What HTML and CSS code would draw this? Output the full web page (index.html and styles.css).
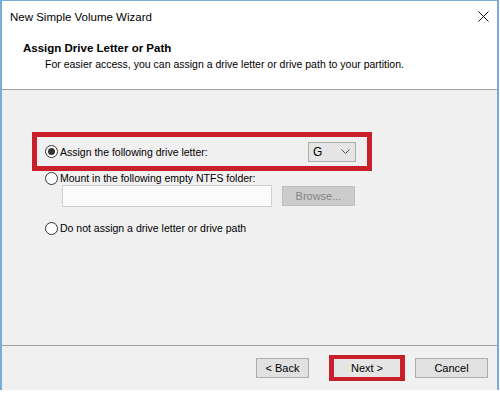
FILE: index.html
```html
<!DOCTYPE html>
<html lang="en">
<head>
  <meta charset="UTF-8" />
  <title>New Simple Volume Wizard</title>
  <link rel="stylesheet" href="styles.css">
</head>
<body>

  <div class="window">
    <div class="titlebar">
      <span class="title">New Simple Volume Wizard</span>
      <svg class="close" width="11" height="11" viewBox="0 0 11 11">
        <path d="M0.5 0.5 L10.5 10.5 M10.5 0.5 L0.5 10.5" stroke="#111" stroke-width="1" fill="none"/>
      </svg>
    </div>

    <div class="header">
      <div class="heading">Assign Drive Letter or Path</div>
      <div class="subtitle">For easier access, you can assign a drive letter or drive path to your partition.</div>
    </div>

    <div class="content">
      <div class="choice picked highlight">
        <label class="option">
          <span class="radio checked"></span>
          <span>Assign the following drive letter:</span>
        </label>
        <div class="dropdown">
          <span>G</span>
          <svg width="9" height="6" viewBox="0 0 9 6">
            <path d="M0.5 0.5 L4.5 4.5 L8.5 0.5" stroke="#555" stroke-width="1" fill="none"/>
          </svg>
        </div>
      </div>

      <label class="choice option">
        <span class="radio"></span>
        <span>Mount in the following empty NTFS folder:</span>
      </label>
      <div class="folder-row">
        <div class="textbox"></div>
        <button class="btn disabled">Browse...</button>
      </div>

      <label class="choice option last">
        <span class="radio"></span>
        <span>Do not assign a drive letter or drive path</span>
      </label>
    </div>

    <div class="footer">
      <button class="btn">&lt; Back</button>
      <div class="highlight next-wrap">
        <button class="btn next">Next &gt;</button>
      </div>
      <button class="btn">Cancel</button>
    </div>
  </div>

</body>
</html>
```

FILE: styles.css
```css
body {
  margin: 0;
  padding: 0;
  background: #fff;
  font-family: "Liberation Sans", Arial, sans-serif;
  font-size: 10.5px;
  color: #000;
}

.window {
  width: 499px;
  height: 390px;
  box-sizing: border-box;
  border: 1px solid #79acd9;
  border-left-width: 2px;
  border-right-width: 2px;
  border-bottom: none;
  display: flex;
  flex-direction: column;
}

.titlebar {
  height: 29px;
  display: flex;
  align-items: center;
  justify-content: space-between;
  padding: 0 8px 0 8px;
  background: #fff;
}

.title {
  font-size: 11.5px;
  margin-top: 2px;
}

.close {
  margin-top: 2px;
}

.header {
  height: 60px;
  box-sizing: border-box;
  padding: 11px 0 0 21px;
  background: #fff;
  border-bottom: 1px solid #a0a0a0;
}

.heading {
  font-weight: bold;
  font-size: 11.5px;
  line-height: 14px;
}

.subtitle {
  padding-left: 22px;
  line-height: 14px;
  margin-top: 2px;
}

.content {
  flex: 1;
  background: #f0f0f0;
  border-bottom: 1px solid #a0a0a0;
  padding: 42px 0 0 30px;
  display: flex;
  flex-direction: column;
  align-items: flex-start;
}

.highlight {
  border: 5px solid #c8202b;
}

.choice.picked {
  width: 340px;
  height: 39px;
  box-sizing: border-box;
  padding: 0 11px 0 8px;
  display: flex;
  align-items: center;
  justify-content: space-between;
}

.option {
  display: flex;
  align-items: center;
  gap: 2px;
  line-height: 14px;
}

label.choice {
  margin-left: 13px;
  height: 14px;
}

.choice.last {
  margin-top: 14px;
}

.radio {
  width: 13px;
  height: 13px;
  box-sizing: border-box;
  border: 1px solid #333;
  border-radius: 50%;
  background: #fff;
  display: flex;
  align-items: center;
  justify-content: center;
}

.radio.checked::after {
  content: "";
  width: 7px;
  height: 7px;
  border-radius: 50%;
  background: #333;
}

.dropdown {
  width: 48px;
  height: 20px;
  box-sizing: border-box;
  background: #e5e5e5;
  border: 1px solid #acacac;
  display: flex;
  align-items: center;
  justify-content: space-between;
  padding: 0 5px 0 4px;
  font-size: 12px;
}

.folder-row {
  display: flex;
  align-items: center;
  gap: 10px;
  margin-left: 30px;
}

.textbox {
  width: 210px;
  height: 22px;
  box-sizing: border-box;
  background: #fbfbfb;
  border: 1px solid #cfcfcf;
}

.btn {
  height: 20px;
  box-sizing: border-box;
  font-family: "Liberation Sans", Arial, sans-serif;
  font-size: 11px;
  color: #000;
  background: #e1e1e1;
  border: 1px solid #adadad;
  padding: 0;
  border-radius: 0;
}

.btn.disabled {
  width: 73px;
  background: #cccccc;
  border-color: #bfbfbf;
  color: #838383;
}

.footer {
  height: 44px;
  background: #f0f0f0;
  display: flex;
  align-items: center;
  justify-content: flex-end;
  padding-right: 9px;
}

.footer > .btn {
  width: 73px;
}

.footer > .btn:first-child {
  width: 53px;
  margin-right: 20px;
}

.next-wrap {
  width: 76px;
  height: 26px;
  box-sizing: border-box;
  display: flex;
  align-items: center;
  justify-content: center;
  margin-right: 10px;
}

.btn.next {
  width: 66px;
  height: 18px;
  border-color: #e5e5e5;
  background: #e5e5e5;
}
```
